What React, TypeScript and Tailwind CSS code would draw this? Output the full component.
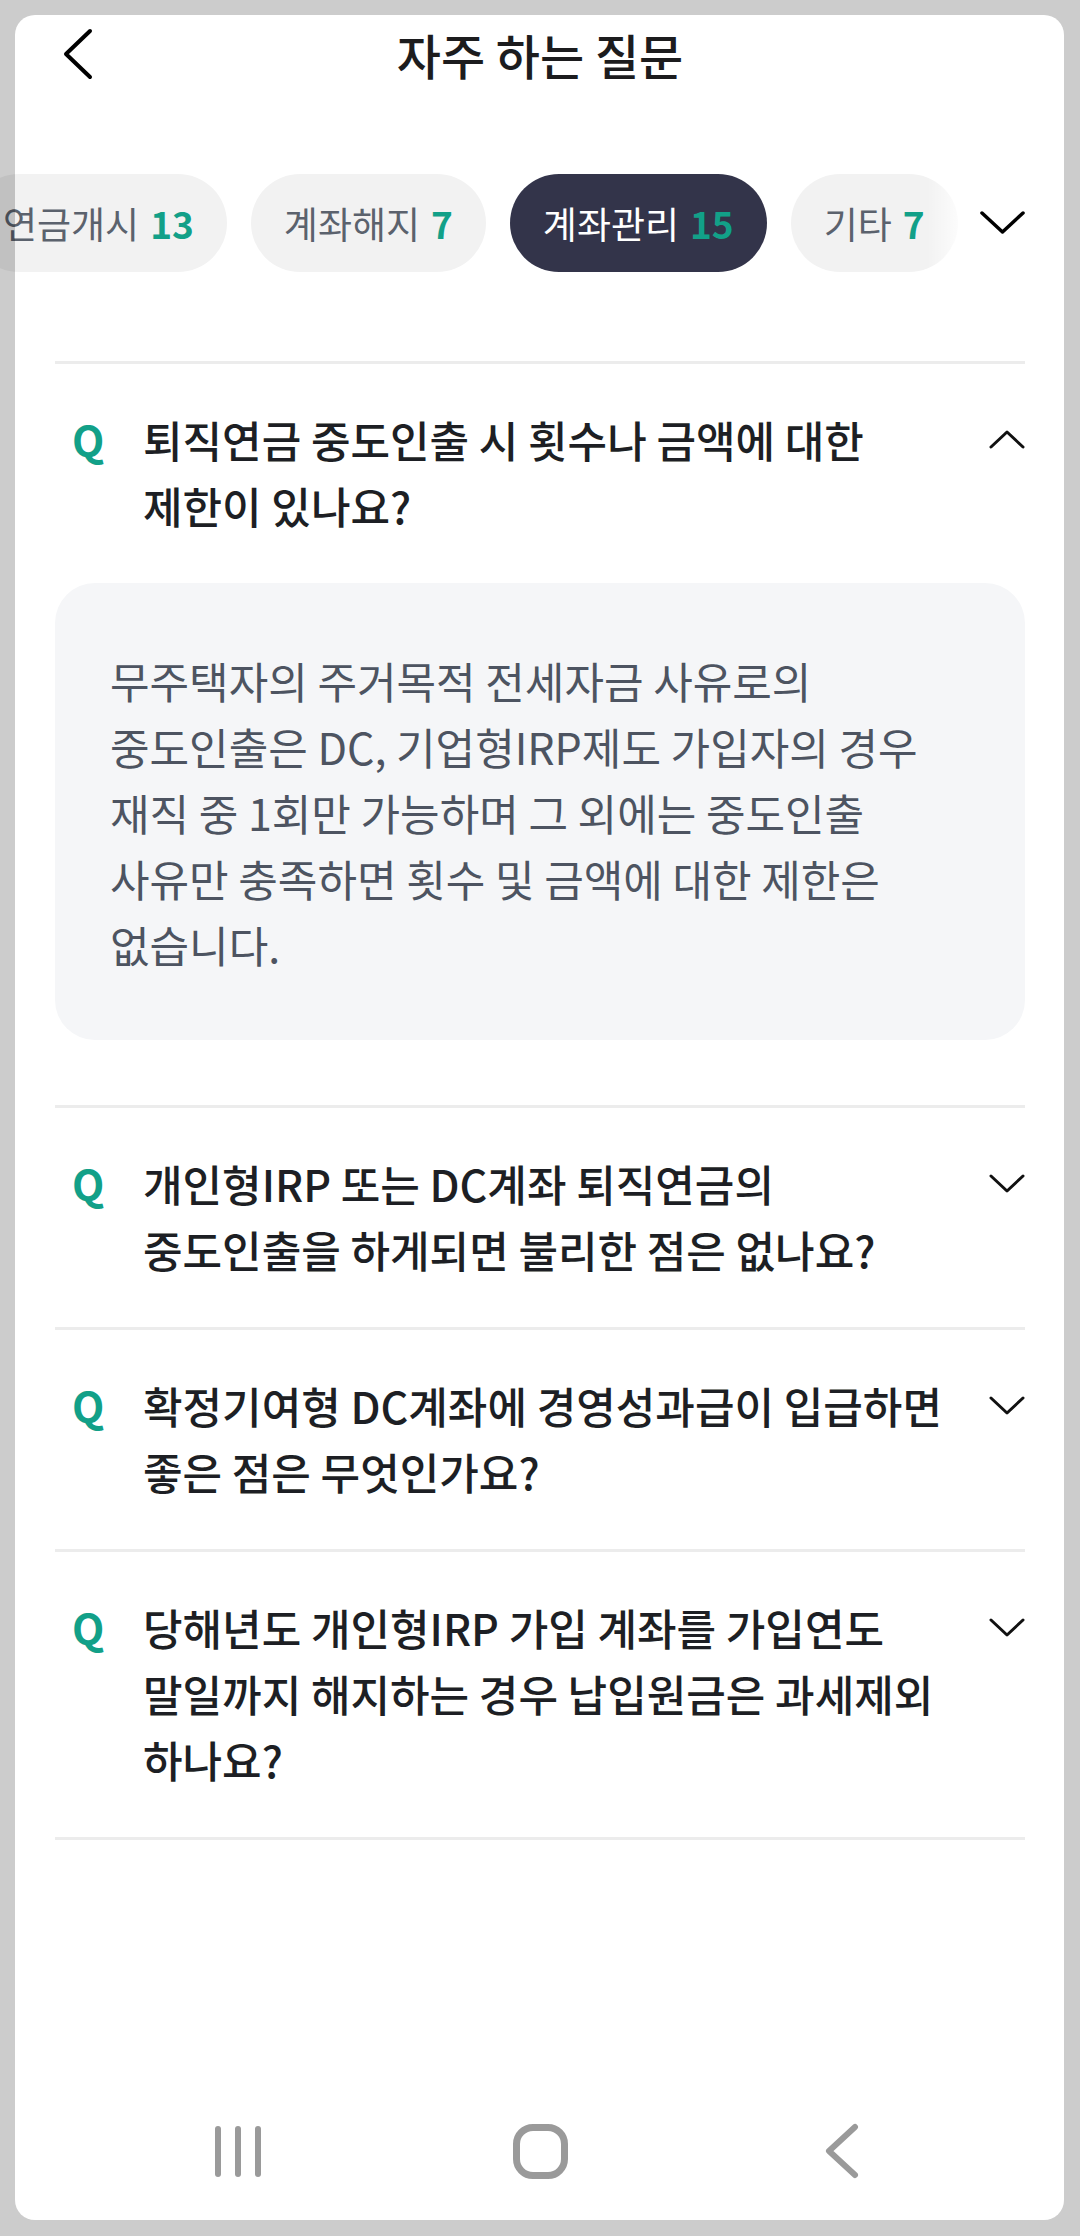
import { Fragment } from "react";

const tabs = [
    { label: "연금개시", count: 13 },
    { label: "계좌해지", count: 7 },
    { label: "계좌관리", count: 15, active: true },
    { label: "기타", count: 7 },
];

const faqs = [
    {
        q: ["퇴직연금 중도인출 시 횟수나 금액에 대한", "제한이 있나요?"],
        a: [
            "무주택자의 주거목적 전세자금 사유로의",
            "중도인출은 DC, 기업형IRP제도 가입자의 경우",
            "재직 중 1회만 가능하며 그 외에는 중도인출",
            "사유만 충족하면 횟수 및 금액에 대한 제한은",
            "없습니다.",
        ],
    },
    { q: ["개인형IRP 또는 DC계좌 퇴직연금의", "중도인출을 하게되면 불리한 점은 없나요?"] },
    { q: ["확정기여형 DC계좌에 경영성과급이 입급하면", "좋은 점은 무엇인가요?"] },
    { q: ["당해년도 개인형IRP 가입 계좌를 가입연도", "말일까지 해지하는 경우 납입원금은 과세제외", "하나요?"] },
];

function Chevron({ up }: { up?: boolean }) {
    return (
        <svg width="36" height="19" viewBox="0 0 36 19" fill="none">
            <polyline
                points={up ? "2,17 18,2 34,17" : "2,2 18,17 34,2"}
                stroke="#111"
                strokeWidth="3"
                strokeLinecap="round"
                strokeLinejoin="round"
            />
        </svg>
    );
}

export default function App() {
    return (
        <div className="relative w-[1080px] h-[2236px] overflow-hidden bg-white flex flex-col font-['Noto_Sans_CJK_KR','Noto_Sans',sans-serif]">
            {/* header */}
            <header className="grid grid-cols-[1fr_auto_1fr] items-center h-[107px]">
                <div className="pl-[63px] flex items-center">
                    <svg width="30" height="52" viewBox="0 0 30 52" fill="none">
                        <polyline points="27,3 3,26 27,49" stroke="#000" strokeWidth="4" strokeLinecap="round" strokeLinejoin="round" />
                    </svg>
                </div>
                <h1 className="text-[48px] leading-none font-medium text-[#1c1c1e]">자주 하는 질문</h1>
                <div />
            </header>

            {/* category tabs */}
            <div className="relative mt-[67px] h-[98px] w-full overflow-hidden">
                <div className="flex gap-[24px] h-full -ml-[30px]">
                    {tabs.map((t) => (
                        <div
                            key={t.label}
                            className={`flex-none flex items-center gap-[11px] h-full px-[33px] rounded-full text-[37px] leading-none ${
                                t.active ? "bg-[#33344a] text-white" : "bg-[#f2f2f2] text-[#5b626d]"
                            }`}
                        >
                            <span>{t.label}</span>
                            <span className="font-bold text-[#12a088]">{t.count}</span>
                        </div>
                    ))}
                </div>
                <div className="absolute right-0 top-0 h-full flex">
                    <div className="w-[40px] h-full bg-gradient-to-r from-white/0 to-white" />
                    <div className="w-[113px] h-full bg-white flex items-center pl-[13px]">
                        <svg width="45" height="24" viewBox="0 0 45 24" fill="none">
                            <polyline points="2,2 22.5,21 43,2" stroke="#000" strokeWidth="3.5" strokeLinecap="round" strokeLinejoin="round" />
                        </svg>
                    </div>
                </div>
            </div>

            {/* faq list */}
            <section className="mt-[89px] px-[55px]">
                {faqs.map((f, i) => (
                    <Fragment key={i}>
                        <div className="h-[3px] bg-[#ececec]" />
                        <div className={f.a ? "pt-[42px] pb-[65px]" : "pt-[42px] pb-[45px]"}>
                            <div className="flex">
                                <div className="w-[88px] pl-[17px] text-[42px] leading-[66px] font-bold text-[#12a088]">Q</div>
                                <div className="flex-1 text-[43px] leading-[66px] font-medium text-[#1d1f24]">
                                    {f.q.map((line) => (
                                        <div key={line} className="whitespace-nowrap">{line}</div>
                                    ))}
                                </div>
                                <div className="w-[60px] h-[66px] flex items-center justify-end">
                                    <Chevron up={!!f.a} />
                                </div>
                            </div>
                            {f.a && (
                                <div className="mt-[45px] rounded-[40px] bg-[#f5f6f8] pl-[55px] pr-[20px] pt-[64px] pb-[63px] text-[43px] leading-[66px] text-[#4d5461]">
                                    {f.a.map((line) => (
                                        <div key={line} className="whitespace-nowrap">{line}</div>
                                    ))}
                                </div>
                            )}
                        </div>
                    </Fragment>
                ))}
                <div className="h-[3px] bg-[#ececec]" />
            </section>

            {/* android nav bar */}
            <nav className="mt-auto mb-[20px] h-[130px] grid grid-cols-3 px-[87px] items-center justify-items-center">
                <div className="flex gap-[14px]">
                    <div className="w-[6px] h-[51px] rounded-full bg-[#9a9a9a]" />
                    <div className="w-[6px] h-[51px] rounded-full bg-[#9a9a9a]" />
                    <div className="w-[6px] h-[51px] rounded-full bg-[#9a9a9a]" />
                </div>
                <div className="w-[55px] h-[55px] rounded-[20px] border-[7px] border-[#9a9a9a]" />
                <svg width="36" height="56" viewBox="0 0 36 56" fill="none">
                    <polyline points="31,4 5,28 31,52" stroke="#9a9a9a" strokeWidth="6" strokeLinecap="round" strokeLinejoin="round" />
                </svg>
            </nav>

            {/* dimmed frame around the sheet */}
            <div className="pointer-events-none absolute left-[15px] top-[15px] right-[16px] bottom-[16px] rounded-[20px] shadow-[0_0_0_80px_rgba(0,0,0,0.2)]" />
        </div>
    );
}
